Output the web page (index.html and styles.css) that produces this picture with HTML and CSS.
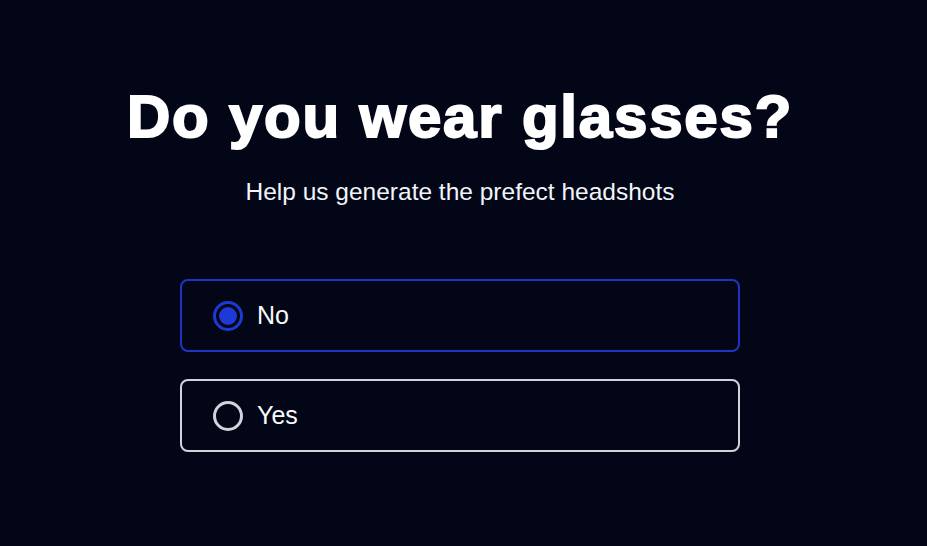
FILE: index.html
```html
<!DOCTYPE html>
<html>
<head>
<meta charset="utf-8">
<link rel="stylesheet" href="styles.css">
</head>
<body>
<main class="page">
  <h1 class="title">Do you wear glasses?</h1>
  <p class="subtitle">Help us generate the prefect headshots</p>
  <div class="options">
    <label class="option selected">
      <span class="radio"><span class="dot"></span></span>
      <span class="label">No</span>
    </label>
    <label class="option">
      <span class="radio"></span>
      <span class="label">Yes</span>
    </label>
  </div>
</main>
</body>
</html>
```
FILE: styles.css
```css
html, body {
  margin: 0;
  padding: 0;
  background: #020617;
  height: 100%;
}
.page {
  width: 920px;
  display: flex;
  flex-direction: column;
  align-items: center;
  padding-top: 82px;
  font-family: "Liberation Sans", Arial, sans-serif;
  color: #f8fafc;
}
.title {
  margin: 0;
  font-size: 60px;
  font-weight: 900;
  line-height: 70px;
  color: #ffffff;
  -webkit-text-stroke: 2px #ffffff;
  letter-spacing: 1.8px;
}
.subtitle {
  margin: 25px 0 0;
  font-size: 24.5px;
  line-height: 30px;
  color: #f1f5f9;
}
.options {
  margin-top: 72px;
  width: 560px;
  display: flex;
  flex-direction: column;
  gap: 27px;
}
.option {
  box-sizing: border-box;
  height: 73px;
  border: 2px solid #d1d5db;
  border-radius: 8px;
  display: flex;
  align-items: center;
  padding-left: 31px;
  gap: 14px;
}
.option.selected {
  border-color: #1e35c4;
}
.radio {
  box-sizing: border-box;
  width: 30px;
  height: 30px;
  border-radius: 50%;
  border: 3px solid #d1d5db;
  display: flex;
  align-items: center;
  justify-content: center;
}
.selected .radio {
  border-color: #1e3ad6;
}
.dot {
  width: 18px;
  height: 18px;
  border-radius: 50%;
  background: #1e3ad6;
}
.label {
  font-size: 25px;
  color: #f8fafc;
}
```
